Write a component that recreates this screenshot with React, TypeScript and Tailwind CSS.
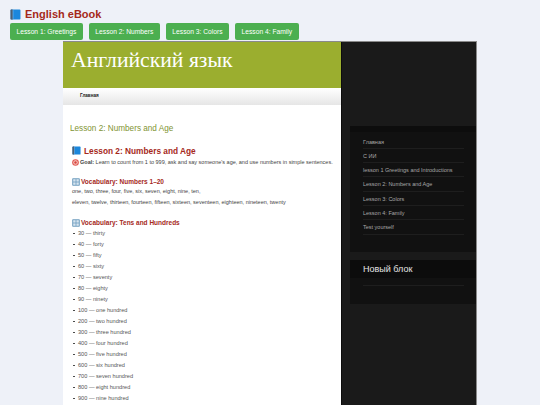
const sans = "font-['Liberation_Sans',Arial,sans-serif]";

function Book({ s = 10 }: { s?: number }) {
  return (
    <svg width={s} height={s} viewBox="0 0 20 20" className="shrink-0">
      <rect x="1" y="1" width="18" height="18" rx="1.5" fill="#1b87dc" />
      <rect x="1" y="1" width="4" height="18" rx="1" fill="#4f5f70" />
      <rect x="5" y="2" width="1" height="16" fill="#7fbdf0" />
    </svg>
  );
}
function Target({ s = 7 }: { s?: number }) {
  return (
    <svg width={s} height={s} viewBox="0 0 20 20" className="shrink-0">
      <circle cx="10" cy="10" r="9.5" fill="#e0564f" />
      <circle cx="10" cy="10" r="6.5" fill="#f3c9c4" />
      <circle cx="10" cy="10" r="3.5" fill="#d9433c" />
    </svg>
  );
}
function Keycap({ s = 8 }: { s?: number }) {
  return (
    <svg width={s} height={s} viewBox="0 0 20 20" className="shrink-0">
      <rect x="0.5" y="0.5" width="19" height="19" rx="2" fill="#6f9dbf" />
      <rect x="3" y="3" width="6" height="6" fill="#d6e4ee" />
      <rect x="11" y="3" width="6" height="6" fill="#d6e4ee" />
      <rect x="3" y="11" width="6" height="6" fill="#d6e4ee" />
      <rect x="11" y="11" width="6" height="6" fill="#d6e4ee" />
    </svg>
  );
}

const lessons = ["Lesson 1: Greetings", "Lesson 2: Numbers", "Lesson 3: Colors", "Lesson 4: Family"];
const vocab = [
  "30 — thirty", "40 — forty", "50 — fifty", "60 — sixty", "70 — seventy", "80 — eighty", "90 — ninety",
  "100 — one hundred", "200 — two hundred", "300 — three hundred", "400 — four hundred", "500 — five hundred",
  "600 — six hundred", "700 — seven hundred", "800 — eight hundred", "900 — nine hundred",
];
const menu = [
  "Главная", "С ИИ", "lesson 1 Greetings and Introductions", "Lesson 2: Numbers and Age",
  "Lesson 3: Colors", "Lesson 4: Family", "Test yourself",
];

function VocabHead({ children }: { children: string }) {
  return (
    <h3 className="flex items-center gap-[1px] h-[10px] text-[6.5px] leading-[10px] font-bold text-[#a5291b]">
      <Keycap />
      {children}
    </h3>
  );
}

export default function App() {
  return (
    <div className={`${sans} h-[405px] w-[540px] overflow-hidden bg-[#eef1f8]`}>
      <div className="pl-[10px] pt-[8px]">
        <h1 className="flex items-center gap-[4px] h-[13px] text-[11px] leading-[13px] font-bold text-[#a5291b]">
          <Book s={11} />
          English eBook
        </h1>
        <div className="mt-[2px] flex gap-[6px]">
          {lessons.map((l) => (
            <div key={l} className="h-[17px] rounded-[2px] bg-[#4caf50] px-[6.5px] text-[6.7px] leading-[17px] text-white">
              {l}
            </div>
          ))}
        </div>
      </div>
      <div className="ml-[63px] mt-[1px] flex h-[400px] w-[414px] border-t border-r border-[#8a8a8a]">
        <main className="w-[278px] shrink-0 bg-white">
          <div className="h-[46px] bg-[#9bae2f] pl-[8px] pt-[5px] font-['Liberation_Serif',serif] text-[21.7px] leading-[26px] text-white">
            Английский язык
          </div>
          <div className="h-[17px] bg-gradient-to-b from-[#ffffff] to-[#e6e6e6] pl-[17px] text-[4.6px] font-bold leading-[15px] text-[#222]">
            Главная
          </div>
          <div className="pl-[7px] pt-[18px] text-[8.2px] leading-[11px] text-[#7f9433]">Lesson 2: Numbers and Age</div>
          <div className="pl-[9px] pt-[10px]">
            <h2 className="flex items-center gap-[3px] h-[13px] text-[8.3px] leading-[12px] font-bold text-[#a5291b]">
              <Book s={9} />
              Lesson 2: Numbers and Age
            </h2>
            <p className="flex items-center gap-[1px] h-[11px] whitespace-nowrap text-[5.5px] leading-[11px] text-[#444]">
              <Target />
              <span><b>Goal:</b> Learn to count from 1 to 999, ask and say someone's age, and use numbers in simple sentences.</span>
            </p>
            <div className="mt-[9px]"><VocabHead>Vocabulary: Numbers 1–20</VocabHead></div>
            <p className="-mt-[1px] text-[5.5px] leading-[11px] text-[#444]">one, two, three, four, five, six, seven, eight, nine, ten,</p>
            <p className="text-[5.5px] leading-[11px] text-[#444]">eleven, twelve, thirteen, fourteen, fifteen, sixteen, seventeen, eighteen, nineteen, twenty</p>
            <div className="mt-[10px]"><VocabHead>Vocabulary: Tens and Hundreds</VocabHead></div>
            <ul>
              {vocab.map((v) => (
                <li key={v} className="flex items-center h-[11px] pl-[1px] text-[5.6px] leading-[11px] text-[#555]">
                  <span className="mr-[3.5px] h-[1.5px] w-[1.5px] rounded-full bg-[#333]" />
                  {v}
                </li>
              ))}
            </ul>
          </div>
        </main>
        <aside className="flex-1 border-l border-[#0c0c0c] bg-[#1a1a1a] pl-[8px] pt-[84px]">
          <div className="h-[126px] bg-[#111111]">
            <div className="h-[6px] bg-[#0d0d0d]" />
            <ul className="pl-[13px] pr-[12px] pt-[2.5px]">
              {menu.map((m) => (
                <li key={m} className="h-[14.3px] border-b border-[#1e1e1e] text-[5.5px] leading-[14px] text-[#a8a8a8]">{m}</li>
              ))}
            </ul>
          </div>
          <div className="mt-[8px] h-[44px] bg-[#111111]">
            <div className="h-[18px] bg-[#0c0c0c] pl-[13px] text-[9px] leading-[18px] text-[#e4e4e4]">Новый блок</div>
            <div className="ml-[13px] mr-[12px] h-[8px] border-b border-[#1e1e1e]" />
          </div>
        </aside>
      </div>
    </div>
  );
}
